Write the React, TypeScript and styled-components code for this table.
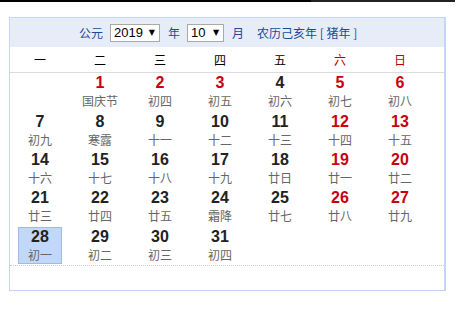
import React from "react";
import styled, { createGlobalStyle } from "styled-components";

const GlobalStyle = createGlobalStyle`
  body {
    margin: 0;
    background: #fff;
    font-family: "Liberation Sans", "Noto Sans CJK SC", sans-serif;
  }
`;

type Day = { n: number; lunar: string; red?: boolean; today?: boolean };

const weekdays = [
  { t: "一" },
  { t: "二" },
  { t: "三" },
  { t: "四" },
  { t: "五" },
  { t: "六", red: true },
  { t: "日", red: true },
];

const lunar = [
  "国庆节", "初四", "初五", "初六", "初七", "初八", "初九", "寒露", "十一", "十二",
  "十三", "十四", "十五", "十六", "十七", "十八", "十九", "廿日", "廿一", "廿二",
  "廿三", "廿四", "廿五", "霜降", "廿七", "廿八", "廿九", "初一", "初二", "初三", "初四",
];

// Oct 1 2019 is a Tuesday, so one empty cell first
const offset = 1;
const redDays = [1, 2, 3, 5, 6, 12, 13, 19, 20, 26, 27];

const days: (Day | null)[] = [
  ...Array.from({ length: offset }, () => null),
  ...lunar.map((l, i) => ({
    n: i + 1,
    lunar: l,
    red: redDays.includes(i + 1),
    today: i + 1 === 28,
  })),
];

export default function App() {
  return (
    <>
      <GlobalStyle />
      <TopBar>
        <BarDark />
        <BarGray />
      </TopBar>
      <Page>
        <Panel>
          <Header>
            <HeadText>公元</HeadText>
            <FakeSelect $w={50}>
              2019<Arrow>▼</Arrow>
            </FakeSelect>
            <HeadText>年</HeadText>
            <FakeSelect $w={37}>
              10<Arrow>▼</Arrow>
            </FakeSelect>
            <HeadText>月</HeadText>
            <Lunar>农历己亥年&nbsp;[&nbsp;猪年&nbsp;]</Lunar>
          </Header>
          <WeekRow>
            {weekdays.map((w) => (
              <WeekCell key={w.t} $red={w.red}>
                {w.t}
              </WeekCell>
            ))}
          </WeekRow>
          <DayGrid>
            {days.map((d, i) => (
              <Cell key={i}>
                {d && (
                  <DayBox $today={d.today}>
                    <Num $red={d.red}>{d.n}</Num>
                    <LunarText>{d.lunar}</LunarText>
                  </DayBox>
                )}
              </Cell>
            ))}
          </DayGrid>
          <Footer />
        </Panel>
      </Page>
    </>
  );
}

const TopBar = styled.div`
  display: flex;
  height: 2px;
`;

const BarDark = styled.div`
  width: 311px;
  background: #000;
`;

const BarGray = styled.div`
  width: 144px;
  background: #222;
`;

const Page = styled.div`
  padding: 15px 0 0 9px;
`;

const Panel = styled.div`
  width: 434px;
  height: 272px;
  border: 1px solid #c3d6f6;
  border-right-width: 2px;
  display: flex;
  flex-direction: column;
`;

const Header = styled.div`
  height: 29px;
  background: #e6edf8;
  display: flex;
  align-items: center;
  padding-left: 69px;
`;

const HeadText = styled.span`
  font-family: "Noto Sans CJK SC", sans-serif;
  font-size: 12px;
  color: #1c4b94;
  margin-right: 7px;
`;

const Lunar = styled(HeadText)`
  margin-left: 6px;
`;

const FakeSelect = styled.span<{ $w: number }>`
  box-sizing: border-box;
  width: ${(p) => p.$w}px;
  height: 18px;
  display: inline-flex;
  align-items: center;
  justify-content: space-between;
  padding: 0 4px 0 3px;
  margin-right: 8px;
  background: #fff;
  border: 1px solid #a9a9a9;
  font-family: "Liberation Sans", sans-serif;
  font-size: 13px;
  color: #000;
`;

const Arrow = styled.span`
  font-family: "DejaVu Sans", sans-serif;
  font-size: 8px;
  color: #000;
`;

const WeekRow = styled.div`
  display: grid;
  grid-template-columns: repeat(7, 60px);
  height: 25px;
  border-bottom: 1px solid #dcdcdc;
`;

const WeekCell = styled.div<{ $red?: boolean }>`
  display: flex;
  align-items: center;
  justify-content: center;
  font-family: "Noto Sans CJK SC", sans-serif;
  font-size: 12px;
  color: ${(p) => (p.$red ? "#c00000" : "#000")};
`;

const DayGrid = styled.div`
  display: grid;
  grid-template-columns: repeat(7, 60px);
  grid-auto-rows: 38.4px;
  border-bottom: 1px dotted #c8c8c8;
`;

const Cell = styled.div`
  display: flex;
  align-items: center;
  justify-content: center;
`;

const DayBox = styled.div<{ $today?: boolean }>`
  width: 42px;
  height: 35px;
  display: flex;
  flex-direction: column;
  align-items: center;
  justify-content: center;
  border: 1px solid ${(p) => (p.$today ? "#9fbae4" : "transparent")};
  background: ${(p) => (p.$today ? "#c2d8fa" : "transparent")};
`;

const Num = styled.div<{ $red?: boolean }>`
  font-family: "Liberation Sans", sans-serif;
  font-weight: bold;
  font-size: 16px;
  line-height: 18px;
  color: ${(p) => (p.$red ? "#c8000f" : "#222")};
`;

const LunarText = styled.div`
  font-family: "Noto Sans CJK SC", sans-serif;
  font-size: 12px;
  line-height: 18px;
  color: #666;
`;

const Footer = styled.div`
  flex: 1;
`;
